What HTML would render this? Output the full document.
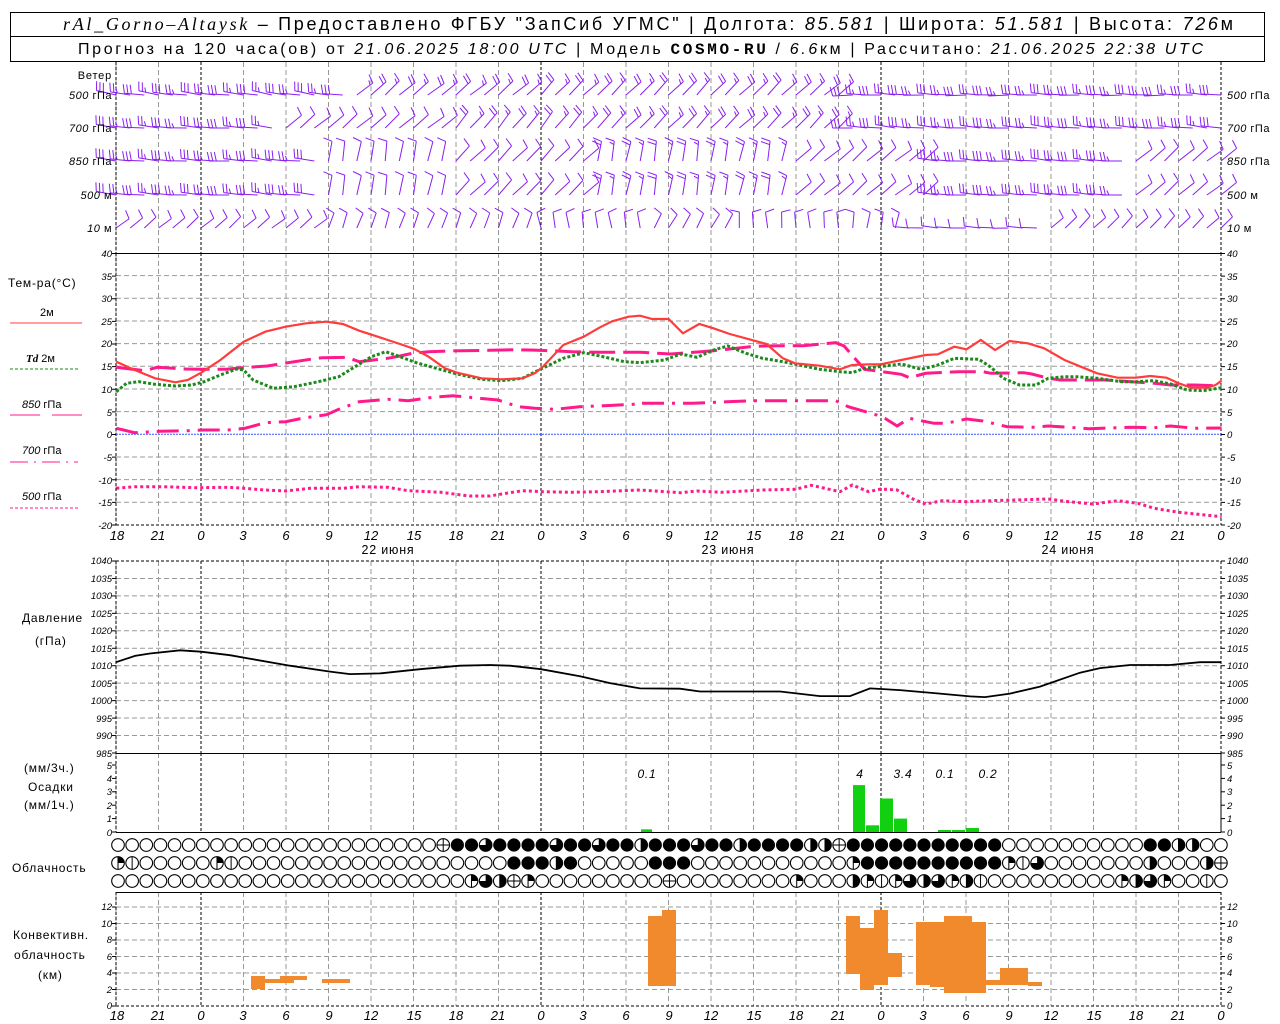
<!DOCTYPE html>
<html><head><meta charset="utf-8">
<style>
html,body{margin:0;padding:0;background:#fff;width:1280px;height:1024px;overflow:hidden}
svg{display:block}
text{font-family:"Liberation Sans",sans-serif;fill:#000}
.t{font-size:10px;font-style:italic}
.l{font-size:12px;letter-spacing:0.8px}
</style></head><body>
<svg id="s" width="1280" height="1024" viewBox="0 0 1280 1024" xmlns="http://www.w3.org/2000/svg">
<rect x="0" y="0" width="1280" height="1024" fill="#fff"/>
<g id="grid"></g>
<g id="data"></g>
<!-- header -->
<rect x="10.5" y="12.5" width="1254" height="49" fill="none" stroke="#000"/>
<line x1="10" y1="36.5" x2="1265" y2="36.5" stroke="#000"/>
<text x="63" y="30" textLength="1170" lengthAdjust="spacing" style="font-size:18px"><tspan font-style="italic" font-family="Liberation Serif">rAl_Gorno–Altaysk</tspan> – Предоставлено ФГБУ "ЗапСиб УГМС" | Долгота: <tspan font-style="italic">85.581</tspan> | Широта: <tspan font-style="italic">51.581</tspan> | Высота: <tspan font-style="italic">726</tspan>м</text>
<text x="78" y="54" textLength="1125" lengthAdjust="spacing" style="font-size:16px">Прогноз на 120 часа(ов) от <tspan font-style="italic">21.06.2025 18:00 UTC</tspan>  | Модель <tspan font-weight="bold" font-family="Liberation Mono">COSMO-RU</tspan> / <tspan font-style="italic">6.6</tspan>км | Рассчитано: <tspan font-style="italic">21.06.2025 22:38 UTC</tspan></text>

<!-- wind labels -->
<text x="112" y="79" text-anchor="end" class="l" style="font-size:11px">Ветер</text>
<g class="t" style="font-size:11px;letter-spacing:0.5px">
<text x="112" y="99" text-anchor="end">500 <tspan font-style="normal">гПа</tspan></text>
<text x="112" y="132" text-anchor="end">700 <tspan font-style="normal">гПа</tspan></text>
<text x="112" y="165" text-anchor="end">850 <tspan font-style="normal">гПа</tspan></text>
<text x="112" y="199" text-anchor="end">500 <tspan font-style="normal">м</tspan></text>
<text x="112" y="232" text-anchor="end">10 <tspan font-style="normal">  м</tspan></text>
<text x="1227" y="99">500 <tspan font-style="normal">гПа</tspan></text>
<text x="1227" y="132">700 <tspan font-style="normal">гПа</tspan></text>
<text x="1227" y="165">850 <tspan font-style="normal">гПа</tspan></text>
<text x="1227" y="199">500 <tspan font-style="normal">м</tspan></text>
<text x="1227" y="232">10 <tspan font-style="normal">  м</tspan></text>
</g>

<!-- temp legend -->
<text x="8" y="287" class="l">Тем-ра(°C)</text>
<text x="40" y="316" style="font-size:11px">2м</text>
<line x1="10" y1="323" x2="82" y2="323" stroke="#ff3c3c" stroke-width="1"/>
<text x="26" y="362" style="font-size:11px"><tspan font-style="italic" font-weight="bold" font-family="Liberation Serif">Td</tspan>   2м</text>
<line x1="10" y1="369" x2="78" y2="369" stroke="#1a8a1a" stroke-dasharray="3,2"/>
<text x="22" y="408" style="font-size:11px"><tspan font-style="italic">850</tspan> гПа</text>
<line x1="10" y1="415" x2="40" y2="415" stroke="#ff1a8c"/><line x1="52" y1="415" x2="82" y2="415" stroke="#ff1a8c"/>
<text x="22" y="454" style="font-size:11px"><tspan font-style="italic">700</tspan> гПа</text>
<line x1="10" y1="462" x2="78" y2="462" stroke="#ff1a8c" stroke-dasharray="18,6,2,6"/>
<text x="22" y="500" style="font-size:11px"><tspan font-style="italic">500</tspan> гПа</text>
<line x1="10" y1="508" x2="78" y2="508" stroke="#ff1a8c" stroke-dasharray="3,2"/>

<text x="22" y="622" class="l">Давление</text>
<text x="35" y="645" class="l">(гПа)</text>
<text x="24" y="772" class="l">(мм/3ч.)</text>
<text x="28" y="791" class="l">Осадки</text>
<text x="24" y="809" class="l">(мм/1ч.)</text>
<text x="12" y="872" class="l">Облачность</text>
<text x="13" y="939" class="l">Конвективн.</text>
<text x="14" y="959" class="l">облачность</text>
<text x="38" y="979" class="l">(км)</text>

<!-- temp y labels -->
<g class="t" style="font-size:9.5px">
<text x="112" y="257" text-anchor="end">40</text><text x="112" y="280" text-anchor="end">35</text><text x="112" y="302" text-anchor="end">30</text><text x="112" y="325" text-anchor="end">25</text><text x="112" y="347" text-anchor="end">20</text><text x="112" y="370" text-anchor="end">15</text><text x="112" y="393" text-anchor="end">10</text><text x="112" y="416" text-anchor="end">5</text><text x="112" y="438" text-anchor="end">0</text><text x="112" y="461" text-anchor="end">-5</text><text x="112" y="484" text-anchor="end">-10</text><text x="112" y="506" text-anchor="end">-15</text><text x="112" y="529" text-anchor="end">-20</text>
<text x="1227" y="257">40</text><text x="1227" y="280">35</text><text x="1227" y="302">30</text><text x="1227" y="325">25</text><text x="1227" y="347">20</text><text x="1227" y="370">15</text><text x="1227" y="393">10</text><text x="1227" y="416">5</text><text x="1227" y="438">0</text><text x="1227" y="461">-5</text><text x="1227" y="484">-10</text><text x="1227" y="506">-15</text><text x="1227" y="529">-20</text>
<!-- pressure -->
<text x="112" y="564" text-anchor="end">1040</text><text x="112" y="582" text-anchor="end">1035</text><text x="112" y="599" text-anchor="end">1030</text><text x="112" y="617" text-anchor="end">1025</text><text x="112" y="634" text-anchor="end">1020</text><text x="112" y="652" text-anchor="end">1015</text><text x="112" y="669" text-anchor="end">1010</text><text x="112" y="687" text-anchor="end">1005</text><text x="112" y="704" text-anchor="end">1000</text><text x="112" y="722" text-anchor="end">995</text><text x="112" y="739" text-anchor="end">990</text><text x="112" y="757" text-anchor="end">985</text>
<text x="1227" y="564">1040</text><text x="1227" y="582">1035</text><text x="1227" y="599">1030</text><text x="1227" y="617">1025</text><text x="1227" y="634">1020</text><text x="1227" y="652">1015</text><text x="1227" y="669">1010</text><text x="1227" y="687">1005</text><text x="1227" y="704">1000</text><text x="1227" y="722">995</text><text x="1227" y="739">990</text><text x="1227" y="757">985</text>
<!-- precip -->
<text x="112" y="769" text-anchor="end">5</text><text x="112" y="782" text-anchor="end">4</text><text x="112" y="795" text-anchor="end">3</text><text x="112" y="809" text-anchor="end">2</text><text x="112" y="822" text-anchor="end">1</text><text x="112" y="836" text-anchor="end">0</text>
<text x="1227" y="769">5</text><text x="1227" y="782">4</text><text x="1227" y="795">3</text><text x="1227" y="809">2</text><text x="1227" y="822">1</text><text x="1227" y="836">0</text>
<!-- conv -->
<text x="112" y="910" text-anchor="end">12</text><text x="112" y="927" text-anchor="end">10</text><text x="112" y="943" text-anchor="end">8</text><text x="112" y="960" text-anchor="end">6</text><text x="112" y="976" text-anchor="end">4</text><text x="112" y="993" text-anchor="end">2</text><text x="112" y="1009" text-anchor="end">0</text>
<text x="1227" y="910">12</text><text x="1227" y="927">10</text><text x="1227" y="943">8</text><text x="1227" y="960">6</text><text x="1227" y="976">4</text><text x="1227" y="993">2</text><text x="1227" y="1009">0</text>
</g>
<!-- hour labels -->
<g class="t" style="font-size:13px" text-anchor="middle">
<text x="117" y="540">18</text><text x="158" y="540">21</text><text x="201" y="540">0</text><text x="243" y="540">3</text><text x="286" y="540">6</text><text x="329" y="540">9</text><text x="371" y="540">12</text><text x="414" y="540">15</text><text x="456" y="540">18</text><text x="498" y="540">21</text><text x="541" y="540">0</text><text x="583" y="540">3</text><text x="626" y="540">6</text><text x="669" y="540">9</text><text x="711" y="540">12</text><text x="754" y="540">15</text><text x="796" y="540">18</text><text x="838" y="540">21</text><text x="881" y="540">0</text><text x="923" y="540">3</text><text x="966" y="540">6</text><text x="1009" y="540">9</text><text x="1051" y="540">12</text><text x="1094" y="540">15</text><text x="1136" y="540">18</text><text x="1178" y="540">21</text><text x="1221" y="540">0</text>
<text x="117" y="1020">18</text><text x="158" y="1020">21</text><text x="201" y="1020">0</text><text x="243" y="1020">3</text><text x="286" y="1020">6</text><text x="329" y="1020">9</text><text x="371" y="1020">12</text><text x="414" y="1020">15</text><text x="456" y="1020">18</text><text x="498" y="1020">21</text><text x="541" y="1020">0</text><text x="583" y="1020">3</text><text x="626" y="1020">6</text><text x="669" y="1020">9</text><text x="711" y="1020">12</text><text x="754" y="1020">15</text><text x="796" y="1020">18</text><text x="838" y="1020">21</text><text x="881" y="1020">0</text><text x="923" y="1020">3</text><text x="966" y="1020">6</text><text x="1009" y="1020">9</text><text x="1051" y="1020">12</text><text x="1094" y="1020">15</text><text x="1136" y="1020">18</text><text x="1178" y="1020">21</text><text x="1221" y="1020">0</text>
</g>
<g style="font-size:12.5px;letter-spacing:0.8px" text-anchor="middle">
<text x="388" y="554">22 июня</text><text x="728" y="554">23 июня</text><text x="1068" y="554">24 июня</text>
</g>
<g class="t" style="font-size:12px;letter-spacing:0.8px" text-anchor="middle">
<text x="647" y="778">0.1</text><text x="860" y="778">4</text><text x="903" y="778">3.4</text><text x="945" y="778">0.1</text><text x="988" y="778">0.2</text>
</g>
</svg>
<script>
(function(){
var NS="http://www.w3.org/2000/svg";
var G=document.getElementById('grid'),D=document.getElementById('data');
function el(p,tag,a){var e=document.createElementNS(NS,tag);for(var k in a)e.setAttribute(k,a[k]);p.appendChild(e);return e;}
var L=116,R=1221,PH=14.167;
function X(h){return L+h*PH;}
var panels=[[62,253],[253,525],[561,753],[753,832],[892,1006]];
for(var k=0;k<=26;k++){var x=L+k*42.5;var day=(k%8==2);
 panels.forEach(function(p){el(G,'line',{x1:x,y1:p[0],x2:x,y2:p[1],stroke:day?'#000':'#999','stroke-dasharray':day?'3,2':'5,3','stroke-width':1});});}
function hg(y,c,d){el(G,'line',{x1:L,y1:y,x2:R,y2:y,stroke:c||'#999','stroke-dasharray':d||'5,3'});}
for(var t=-15;t<=35;t+=5){if(t!=0)hg(434.3-t*4.533);}
for(var p=1035;p>=990;p-=5)hg(561+(1040-p)*3.49);
hg(561,'#000','3,2');
for(var c=2;c<=12;c+=2)hg(1006-c*8.25);
el(G,'line',{x1:L,y1:253.5,x2:R,y2:253.5,stroke:'#000'});
el(G,'line',{x1:L,y1:525,x2:R,y2:525,stroke:'#000','stroke-dasharray':'3,2'});
el(G,'line',{x1:L,y1:753.5,x2:R,y2:753.5,stroke:'#000'});
el(G,'line',{x1:L,y1:832.5,x2:R,y2:832.5,stroke:'#000'});
el(G,'line',{x1:L,y1:892.5,x2:R,y2:892.5,stroke:'#000'});
el(G,'line',{x1:L,y1:1006,x2:R,y2:1006,stroke:'#000','stroke-dasharray':'3,2'});
[L,R].forEach(function(x){[[62,253],[253,525],[561,832],[892,1006]].forEach(function(p){el(G,'line',{x1:x,y1:p[0],x2:x,y2:p[1],stroke:'#000','stroke-dasharray':'3,2'});});});
function ticks(y0,y1,n){for(var i=0;i<=n;i++){var y=y0+(y1-y0)*i/n;el(G,'line',{x1:L-4,y1:y,x2:L,y2:y,stroke:'#000'});el(G,'line',{x1:R,y1:y,x2:R+4,y2:y,stroke:'#000'});}}
ticks(253.5,525,12);ticks(561,753,11);ticks(765,832,5);ticks(907,1006,6);
el(G,'line',{x1:L,y1:434.3,x2:R,y2:434.3,stroke:'#3355ff','stroke-dasharray':'2,1'});
function pts(a,b){var s=[];a.forEach(function(p){s.push((p[0]/2.45).toFixed(1)+','+(250+p[1]/3).toFixed(1));});b.forEach(function(p){s.push((640+p[0]/2.45).toFixed(1)+','+(250+p[1]/3).toFixed(1));});return s.join(' ');}
function pl(s,st){var a={points:s,fill:'none'};for(var k in st)a[k]=st[k];el(D,'polyline',a);}
var t500a=[[285,715],[330,710],[400,710],[480,713],[560,712],[600,715],[650,720],[700,723],[760,715],[840,715],[880,710],[950,712],[1000,722],[1080,727],[1150,738],[1200,738],[1240,730],[1280,722],[1330,725],[1400,727],[1470,725],[1568,720]];
var t500b=[[0,720],[100,728],[140,723],[200,727],[300,720],[380,718],[420,706],[490,725],[520,705],[560,725],[590,717],[630,720],[670,748],[700,762],[740,752],[800,755],[860,752],[920,750],[1000,747],[1050,755],[1110,762],[1170,752],[1220,760],[1260,775],[1320,787],[1425,800]];
pl(pts(t500a,t500b),{stroke:'#ff1a8c','stroke-width':3,'stroke-dasharray':'3,3'});
var t700a=[[285,535],[330,548],[390,544],[460,542],[500,540],[560,540],[600,535],[650,518],[700,515],[740,505],[800,494],[830,478],[880,455],[950,448],[1000,452],[1060,442],[1110,437],[1160,443],[1220,450],[1270,470],[1310,475],[1360,478],[1420,470],[1480,467],[1568,462]];
var t700b=[[0,460],[130,460],[200,456],[280,452],[350,452],[480,452],[510,470],[580,495],[600,505],[630,528],[660,505],[720,520],[750,520],[800,507],[840,513],[900,530],[960,532],[1000,528],[1050,532],[1100,536],[1200,532],[1260,533],[1300,528],[1360,535],[1425,534]];
pl(pts(t700a,t700b),{stroke:'#ff1a8c','stroke-width':3,'stroke-dasharray':'22,8,3,8'});
var t850a=[[285,352],[355,362],[385,352],[455,357],[490,358],[555,358],[585,354],[655,348],[680,343],[760,328],[790,323],[850,322],[880,335],[950,325],[980,318],[1010,310],[1050,305],[1100,303],[1200,301],[1260,299],[1300,300],[1350,302],[1400,305],[1470,307],[1568,307]];
var t850b=[[0,307],[75,312],[100,310],[180,302],[270,290],[300,288],[380,287],[400,287],[480,278],[500,288],[530,330],[550,358],[640,373],[660,383],[700,370],[780,365],[840,365],[860,370],[940,368],[960,372],[1000,385],[1030,390],[1070,390],[1140,390],[1260,400],[1300,405],[1360,405],[1425,408]];
pl(pts(t850a,t850b),{stroke:'#ff1a8c','stroke-width':3,'stroke-dasharray':'26,8'});
var tda=[[285,425],[310,400],[340,395],[380,403],[430,408],[470,405],[500,395],[540,375],[580,357],[597,360],[620,390],[670,415],[720,410],[780,395],[830,380],[870,350],[910,320],[945,305],[980,320],[1020,338],[1060,352],[1120,372],[1180,388],[1230,392],[1280,385],[1320,360],[1380,325],[1430,308],[1470,318],[1530,335],[1568,338]];
var tdb=[[0,338],[60,330],[100,312],[140,322],[180,300],[215,288],[260,310],[300,325],[350,335],[390,345],[440,358],[490,365],[520,368],[550,355],[600,348],[640,342],[690,358],[730,345],[770,325],[830,328],[860,352],[890,385],[930,405],[970,405],[1000,385],[1040,380],[1070,380],[1120,385],[1180,395],[1215,395],[1260,392],[1300,402],[1340,420],[1380,422],[1425,413]];
pl(pts(tda,tdb),{stroke:'#1a8a1a','stroke-width':3,'stroke-dasharray':'3,2'});
var t2a=[[285,335],[330,360],[380,385],[430,397],[460,390],[493,368],[540,330],[597,275],[650,245],[700,230],[750,220],[800,215],[840,222],[880,242],[930,262],[980,282],[1015,297],[1050,320],[1090,355],[1120,368],[1180,385],[1230,388],[1280,385],[1310,370],[1330,350],[1380,285],[1430,260],[1470,232],[1500,214],[1540,200],[1568,197]];
var t2b=[[0,197],[30,207],[70,207],[105,250],[145,222],[180,235],[220,252],[280,272],[310,282],[350,325],[380,340],[440,347],[490,358],[520,345],[560,343],[590,343],[640,330],[700,315],[730,313],[770,290],[800,298],[835,270],[870,300],[905,273],[950,280],[990,295],[1040,330],[1080,350],[1120,370],[1170,383],[1215,383],[1250,378],[1290,383],[1320,400],[1350,413],[1390,413],[1410,405],[1425,392]];
pl(pts(t2a,t2b),{stroke:'#ff3c3c','stroke-width':2.2});
var pr=[[116,1011],[135,1012.8],[150,1013.5],[180,1014.4],[201,1014],[230,1013],[250,1012],[290,1010],[330,1008.3],[350,1007.6],[380,1007.8],[420,1009],[460,1010],[490,1010.2],[510,1010],[541,1009],[580,1007],[610,1005],[640,1003.5],[680,1003.4],[700,1002.6],[780,1002.6],[820,1001.3],[850,1001.3],[870,1003.5],[900,1003],[940,1002],[970,1001.2],[985,1001],[1010,1002],[1040,1004],[1080,1008],[1100,1009.3],[1130,1010.2],[1170,1010.2],[1200,1011],[1221,1011]];
pl(pr.map(function(p){return p[0]+','+(561+(1040-p[1])*3.49).toFixed(1);}).join(' '),{stroke:'#000','stroke-width':1.8});
[[641,653,0.2],[853,866,3.5],[866,880,0.5],[880,894,2.5],[894,908,1],[938,952,0.15],[952,966,0.15],[966,980,0.3]].forEach(function(b){var h=b[2]*13.4;el(D,'rect',{x:b[0],y:832-h,width:b[1]-b[0]-1,height:h,fill:'#10d010'});});
[[251,265,976,989],[265,280,979,983],[280,294,976,983],[294,307,976,980],[322,350,979,983],[648,662,916,986],[662,676,910,986],[846,860,916,974],[860,874,928,990],[874,888,910,985],[888,902,953,977],[916,930,922,985],[930,944,922,987],[944,958,916,993],[958,972,916,993],[972,986,922,993],[986,1000,980,985],[1000,1014,968,985],[1014,1028,968,985],[1028,1042,982,986]].forEach(function(b){el(D,'rect',{x:b[0],y:b[2],width:b[1]-b[0],height:b[3]-b[2],fill:'#f08a2c'});});
function mk(n,map){var a=[];for(var i=0;i<n;i++)a.push('o');for(var k in map)a[k]=map[k];return a;}
var r1={23:'x',26:'t',31:'t',34:'t',37:'h',41:'t',44:'h',49:'h',50:'h',51:'x',75:'h',76:'h',73:'f',74:'f'};
for(var i=24;i<=62;i++)if(!r1[i])r1[i]='f';
var r2={0:'q',1:'v',7:'q',8:'v',28:'f',29:'f',30:'f',31:'h',32:'f',38:'f',39:'f',40:'f',52:'q',63:'q',64:'v',65:'t',73:'h',77:'h',78:'x'};
for(var i=53;i<=62;i++)r2[i]='f';
var r3={25:'q',26:'t',27:'h',28:'x',29:'q',39:'x',48:'q',52:'h',53:'q',54:'v',55:'q',56:'t',57:'h',58:'t',59:'q',60:'h',61:'v',71:'q',72:'h',73:'t',74:'q',77:'v'};
var rows=[[845,mk(79,r1)],[863,mk(79,r2)],[881,mk(79,r3)]];
rows.forEach(function(r){var y=r[0];r[1].forEach(function(s,i){var cx=118+i*14.14,rr=6.3;
 if(s=='f'){el(D,'circle',{cx:cx,cy:y,r:rr+0.3,fill:'#000'});return;}
 el(D,'circle',{cx:cx,cy:y,r:rr,fill:'#fff',stroke:'#000','stroke-width':1.1});
 if(s=='q')el(D,'path',{d:'M'+cx+','+y+' V'+(y-rr)+' A'+rr+','+rr+' 0 0 1 '+(cx+rr)+','+y+' Z',fill:'#000'});
 if(s=='h')el(D,'path',{d:'M'+cx+','+(y-rr)+' A'+rr+','+rr+' 0 0 1 '+cx+','+(y+rr)+' Z',fill:'#000'});
 if(s=='t')el(D,'path',{d:'M'+cx+','+y+' V'+(y-rr)+' A'+rr+','+rr+' 0 1 1 '+(cx-rr)+','+y+' Z',fill:'#000'});
 if(s=='v'||s=='x'||s=='q'||s=='h')el(D,'line',{x1:cx,y1:y-rr,x2:cx,y2:y+rr,stroke:'#000'});
 if(s=='x')el(D,'line',{x1:cx-rr,y1:y,x2:cx+rr,y2:y,stroke:'#000'});
});});
var W='#8a1ef0';
var rowsW=[[95,[[0,172,3],[17,40,2],[30,45,2],[48,40,2],[52,178,3]],20],
[128,[[0,175,3],[12,40,1],[24,50,2],[35,45,2],[52,175,3]],20],
[161,[[0,175,3],[15,80,1],[24,45,1],[34,80,2],[48,40,1],[58,176,3],[72,40,1]],20],
[195,[[0,175,3],[15,80,1],[24,45,1],[34,80,2],[48,40,1],[58,176,3],[72,40,1]],20],
[228,[[0,40,1],[15,70,1],[30,100,1],[38,60,1],[44,95,1],[52,80,1],[56,176,1],[66,45,1]],16]];
rowsW.forEach(function(rw){var y=rw[0],kf=rw[1],len=rw[2];
 for(var h=0;h<=78;h++){var seg=kf[0];kf.forEach(function(k){if(h>=k[0])seg=k;});
  var th=(seg[1]+((h*37)%11-5))*Math.PI/180,n=seg[2];
  var x0=X(h),dx=Math.cos(th),dy=-Math.sin(th);
  var x1=x0+dx*len,y1=y+dy*len;
  var d='M'+x0.toFixed(1)+','+y.toFixed(1)+' L'+x1.toFixed(1)+','+y1.toFixed(1);
  var px=-dy,py=dx; if(py>0){px=-px;py=-py;}
  for(var f=0;f<n;f++){var bx=x1-dx*f*3.5,by=y1-dy*f*3.5;var fl=(f==n-1&&n>1&&h%2)?4.5:9;
   d+=' M'+bx.toFixed(1)+','+by.toFixed(1)+' l'+(px*fl+dx*2).toFixed(1)+','+(py*fl+dy*2).toFixed(1);}
  el(D,'path',{d:d,stroke:W,'stroke-width':1,fill:'none'});
 }});
})();
</script>
</body></html>
